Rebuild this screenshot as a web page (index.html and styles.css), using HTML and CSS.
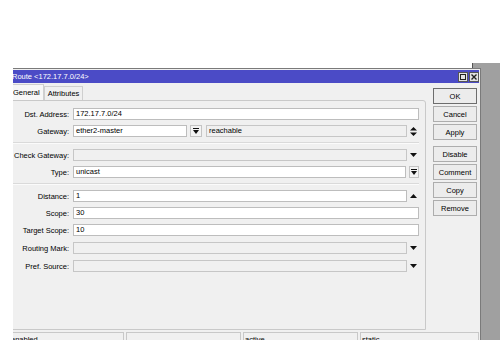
FILE: index.html
```html
<!DOCTYPE html>
<html lang="en">
<head>
    <meta charset="UTF-8">
    <meta name="viewport" content="width=device-width, initial-scale=1.0">
    <title>Route &lt;172.17.7.0/24&gt;</title>
    <link rel="stylesheet" href="styles.css">
</head>
<body>
    <!-- window lying behind, on the right -->
    <div class="behind"></div>

    <div class="clip">
        <div class="window">
            <div class="titlebar">
                <span class="title">Route &lt;172.17.7.0/24&gt;</span>
                <span class="tbtn"><svg width="6" height="6" viewBox="0 0 6 6"><rect x="0.5" y="0.5" width="5" height="5" fill="none" stroke="#222" stroke-width="1"/></svg></span>
                <span class="tbtn"><svg width="6" height="6" viewBox="0 0 6 6"><path d="M0.5 0.5 L5.5 5.5 M5.5 0.5 L0.5 5.5" stroke="#222" stroke-width="1.4"/></svg></span>
            </div>

            <div class="cuerpo">
                <div class="izq">
                    <div class="tabs">
                        <div class="tab activo">General</div>
                        <div class="tab">Attributes</div>
                    </div>
                    <div class="panel">
                        <div class="row">
                            <span class="lbl">Dst. Address:</span>
                            <span class="box">172.17.7.0/24</span>
                        </div>
                        <div class="row">
                            <span class="lbl">Gateway:</span>
                            <span class="box gw">ether2-master</span>
                            <span class="dbtn"><svg width="6" height="6" viewBox="0 0 6 6"><rect x="0" y="0" width="6" height="1" fill="#111"/><path d="M0 2 L6 2 L3 6 Z" fill="#111"/></svg></span>
                            <span class="box ro">reachable</span>
                            <span class="ico"><svg width="7" height="9" viewBox="0 0 7 9"><path d="M0 3.5 L7 3.5 L3.5 0 Z M0 5.5 L7 5.5 L3.5 9 Z" fill="#111"/></svg></span>
                        </div>
                        <div class="sep"></div>
                        <div class="row">
                            <span class="lbl">Check Gateway:</span>
                            <span class="box ro"></span>
                            <span class="ico"><svg width="7" height="4" viewBox="0 0 7 4"><path d="M0 0 L7 0 L3.5 4 Z" fill="#111"/></svg></span>
                        </div>
                        <div class="row">
                            <span class="lbl">Type:</span>
                            <span class="box">unicast</span>
                            <span class="dbtn sm"><svg width="6" height="6" viewBox="0 0 6 6"><rect x="0" y="0" width="6" height="1" fill="#111"/><path d="M0 2 L6 2 L3 6 Z" fill="#111"/></svg></span>
                        </div>
                        <div class="sep ancho"></div>
                        <div class="row">
                            <span class="lbl">Distance:</span>
                            <span class="box">1</span>
                            <span class="ico"><svg width="7" height="4" viewBox="0 0 7 4"><path d="M0 4 L7 4 L3.5 0 Z" fill="#111"/></svg></span>
                        </div>
                        <div class="row">
                            <span class="lbl">Scope:</span>
                            <span class="box">30</span>
                        </div>
                        <div class="row suelto">
                            <span class="lbl">Target Scope:</span>
                            <span class="box">10</span>
                        </div>
                        <div class="row suelto">
                            <span class="lbl">Routing Mark:</span>
                            <span class="box ro"></span>
                            <span class="ico"><svg width="7" height="4" viewBox="0 0 7 4"><path d="M0 0 L7 0 L3.5 4 Z" fill="#111"/></svg></span>
                        </div>
                        <div class="row">
                            <span class="lbl">Pref. Source:</span>
                            <span class="box ro"></span>
                            <span class="ico"><svg width="7" height="4" viewBox="0 0 7 4"><path d="M0 0 L7 0 L3.5 4 Z" fill="#111"/></svg></span>
                        </div>
                    </div>
                </div>

                <div class="botones">
                    <button class="default">OK</button>
                    <button>Cancel</button>
                    <button>Apply</button>
                    <button class="aparte">Disable</button>
                    <button>Comment</button>
                    <button>Copy</button>
                    <button>Remove</button>
                </div>
            </div>

            <div class="status">
                <div class="celda">enabled</div>
                <div class="celda"></div>
                <div class="celda">active</div>
                <div class="celda">static</div>
            </div>
        </div>
    </div>
</body>
</html>
```

FILE: styles.css
```css
*{
    margin: 0px;
    padding: 0px;
    box-sizing: border-box;
}
body{
    width: 500px;
    height: 340px;
    overflow: hidden;
    position: relative;
    background: #fff;
    font-family: "Liberation Sans", Arial, sans-serif;
    font-size: 7.5px;
    color: #000;
}

.behind{
    position: absolute;
    left: 472px;
    top: 63px;
    width: 28px;
    height: 277px;
    background: #a0a0a0;
    border-left: 1px solid #555;
}

.clip{
    position: absolute;
    left: 13px;
    top: 68px;
    width: 468px;
    height: 272px;
    overflow: hidden;
}

.window{
    margin-left: -6px;
    width: 474px;
    height: 300px;
    background: #f0f0f0;
    border: 1px solid #7a7a7a;
    padding: 1px;
}

.titlebar{
    display: flex;
    align-items: center;
    height: 13px;
    padding-left: 3px;
    background: #4b4bc6;
    color: #fff;
}
.title{
    flex: 1;
    white-space: nowrap;
}
.tbtn{
    display: flex;
    align-items: center;
    justify-content: center;
    width: 10px;
    height: 10px;
    margin-left: 1px;
    background: #e2e2e2;
    border: 1px solid #555;
}

.cuerpo{
    display: flex;
}
.izq{
    width: 417px;
}

.tabs{
    display: flex;
    align-items: flex-end;
    height: 17px;
}
.tab{
    height: 14px;
    padding: 0px 3px;
    line-height: 13px;
    border: 1px solid #cfcfcf;
    border-bottom: none;
    background: #f0f0f0;
    white-space: nowrap;
}
.tab.activo{
    height: 16px;
    line-height: 15px;
    background: #f7f7f7;
}

.panel{
    margin-left: 2px;
    height: 230px;
    padding: 7px 6px 0px 0px;
    border: 1px solid #c9c9c9;
    border-radius: 0px 3px 0px 0px;
}

.row{
    display: flex;
    align-items: center;
    height: 12px;
    margin-bottom: 5px;
}
.row.suelto{
    margin-bottom: 6px;
}
.lbl{
    display: flex;
    justify-content: flex-end;
    flex-shrink: 0;
    width: 57px;
    margin-right: 4px;
    white-space: nowrap;
}
.box{
    flex: 1;
    height: 12px;
    padding-left: 2px;
    line-height: 10px;
    background: #fff;
    border: 1px solid #bdbdbd;
    white-space: nowrap;
    overflow: hidden;
}
.box.ro{
    background: #f0f0f0;
    border-color: #c6c6c6;
}
.box.gw{
    flex: none;
    width: 114px;
}
.dbtn{
    display: flex;
    align-items: center;
    justify-content: center;
    width: 12px;
    height: 12px;
    margin: 0px 4px 0px 3px;
    background: #f4f4f4;
    border: 1px solid #c4c4c4;
}
.dbtn.sm{
    width: 10px;
    margin: 0px 0px 0px 3px;
}
.ico{
    display: flex;
    align-items: center;
    justify-content: center;
    width: 12px;
    height: 12px;
}

.sep{
    height: 2px;
    margin: 1px 0px 5px 0px;
    border-top: 1px solid #dadada;
    border-bottom: 1px solid #fbfbfb;
}
.sep.ancho{
    margin-top: 2px;
}

.botones{
    display: flex;
    flex-direction: column;
    gap: 2px;
    width: 44px;
    margin-left: 7px;
    padding-top: 5px;
}
button{
    height: 16px;
    background: #ececec;
    border: 1px solid #adadad;
    font-family: "Liberation Sans", Arial, sans-serif;
    font-size: 7.5px;
    color: #000;
}
button.default{
    border-color: #6d6d6d;
}
button.aparte{
    margin-top: 4px;
}

.status{
    display: grid;
    grid-template-columns: 115px 115px 115px 1fr;
    gap: 2px;
    margin-top: 2px;
    height: 14px;
}
.celda{
    padding: 2px 0px 0px 1px;
    border: 1px solid #c8c8c8;
    border-bottom: none;
    white-space: nowrap;
}
```
